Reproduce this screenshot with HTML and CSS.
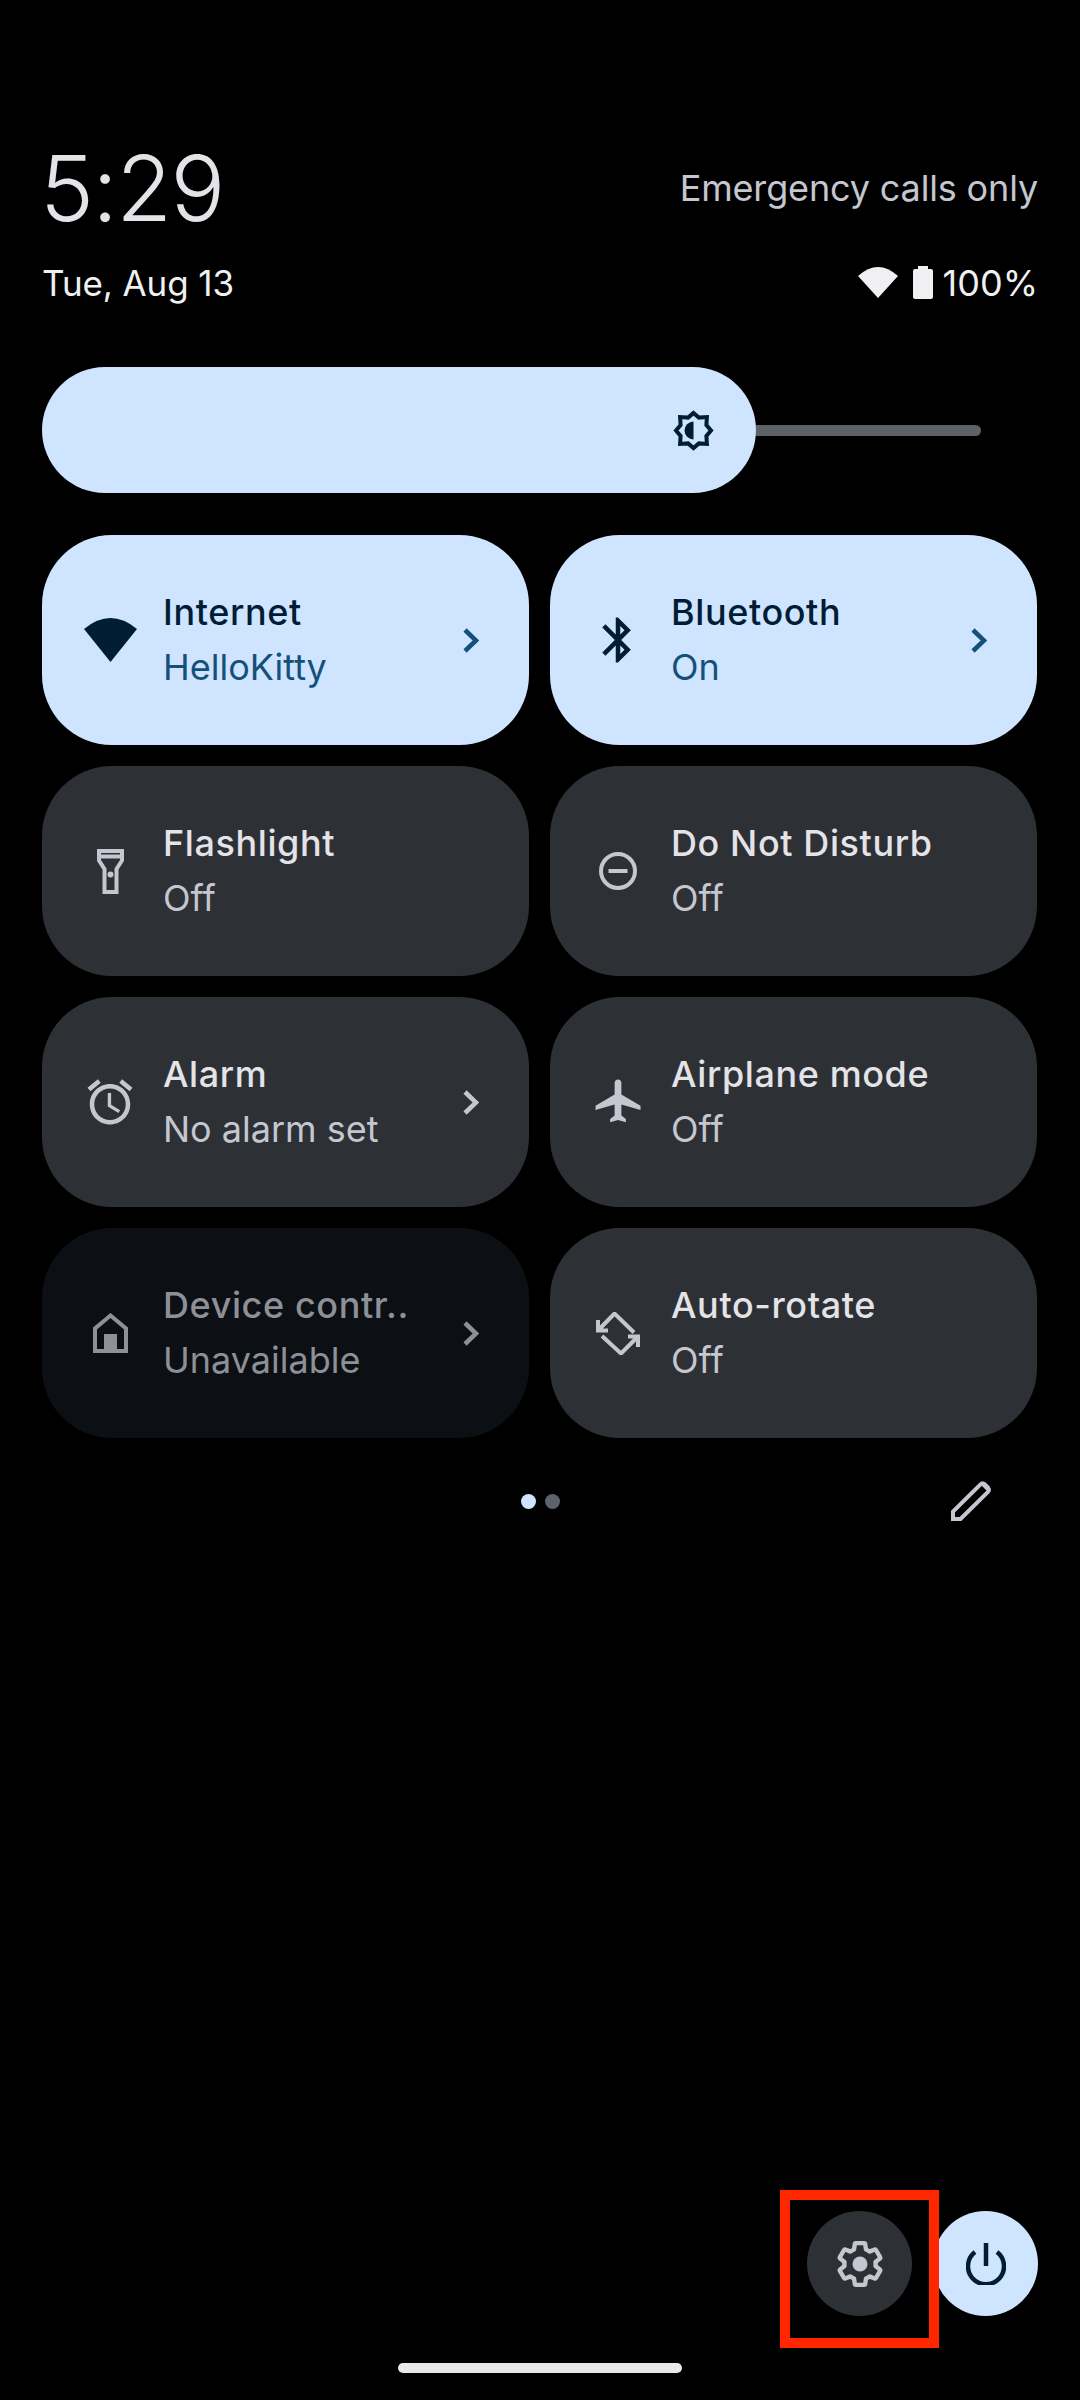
FILE: index.html
```html
<!DOCTYPE html>
<html lang="en">
<head>
    <meta charset="UTF-8">
    <meta name="viewport" content="width=device-width, initial-scale=1.0">
    <title>Quick settings</title>
    <link rel="stylesheet" href="styles.css">
</head>
<body>
    <div class="shade">
        <header class="header">
            <div class="header-row header-top">
                <span class="clock">5:29</span>
                <span class="carrier">Emergency calls only</span>
            </div>
            <div class="header-row header-bottom">
                <span class="date">Tue, Aug 13</span>
                <div class="status">
                    <svg class="status-wifi" viewBox="0 0 40 31"><path d="M0 9Q20-9 40 9L20 31Z"/></svg>
                    <svg class="status-battery" viewBox="0 0 20 33"><path d="M5 0h10v3h3q2 0 2 2v26q0 2-2 2H2q-2 0-2-2V5q0-2 2-2h3Z"/></svg>
                    <span class="battery-text">100%</span>
                </div>
            </div>
        </header>

        <div class="brightness">
            <div class="brightness-fill">
                <svg class="brightness-icon" viewBox="0 0 41 41">
                    <path class="line" d="M20.500 3 25.900 7.600 33.900 7.100 33.400 15.100 38 20.500 33.400 25.900 33.900 33.900 25.900 33.400 20.500 38 15.100 33.400 7.100 33.900 7.600 25.900 3 20.500 7.600 15.100 7.100 7.100 15.100 7.600Z"/>
                    <path d="M20.500 11.500A9 9 0 0 0 20.500 29.500Z"/>
                </svg>
            </div>
            <div class="brightness-track"></div>
        </div>

        <div class="tiles">
            <div class="tile active">
                <div class="tile-icon">
                    <svg class="ic-wifi" viewBox="0 0 53 44"><path class="solid" d="M0 11Q26.500-11 53 11L26.500 44Z"/></svg>
                </div>
                <div class="tile-text">
                    <div class="tile-title">Internet</div>
                    <div class="tile-sub">HelloKitty</div>
                </div>
                <svg class="chevron" viewBox="0 0 16 25"><path d="M2 2 13 12.500 2 23"/></svg>
            </div>
            <div class="tile active">
                <div class="tile-icon">
                    <svg class="ic-full" viewBox="0 0 24 24"><path class="solid" d="M17.71 7.71L12 2h-1v7.59L6.41 5 5 6.41 10.59 12 5 17.59 6.41 19 11 14.41V22h1l5.71-5.71-4.3-4.29 4.3-4.29zM13 5.83l1.88 1.88L13 9.59V5.83zm1.88 10.46L13 18.17v-3.76l1.88 1.88z"/></svg>
                </div>
                <div class="tile-text">
                    <div class="tile-title">Bluetooth</div>
                    <div class="tile-sub">On</div>
                </div>
                <svg class="chevron" viewBox="0 0 16 25"><path d="M2 2 13 12.500 2 23"/></svg>
            </div>

            <div class="tile">
                <div class="tile-icon">
                    <svg class="ic-flash" viewBox="0 0 27 45">
                        <path class="line" d="M2 2H25V11.500L19.500 20V43H7.500V20L2 11.500ZM2 7.500H25"/>
                        <circle class="solid" cx="13.500" cy="25.500" r="3"/>
                    </svg>
                </div>
                <div class="tile-text">
                    <div class="tile-title">Flashlight</div>
                    <div class="tile-sub">Off</div>
                </div>
            </div>
            <div class="tile">
                <div class="tile-icon">
                    <svg class="ic-dnd" viewBox="0 0 38 38">
                        <circle class="line" cx="19" cy="19" r="17"/>
                        <path class="line" d="M9.500 19H28.500"/>
                    </svg>
                </div>
                <div class="tile-text">
                    <div class="tile-title">Do Not Disturb</div>
                    <div class="tile-sub">Off</div>
                </div>
            </div>

            <div class="tile">
                <div class="tile-icon">
                    <svg class="ic-full" viewBox="0 0 24 24"><path class="solid" d="M22 5.72l-4.6-3.86-1.29 1.53 4.6 3.86L22 5.72zM7.88 3.39L6.6 1.86 2 5.71l1.29 1.53 4.59-3.85zM12.5 8H11v6l4.75 2.85.75-1.23-4-2.37V8zM12 4c-4.97 0-9 4.03-9 9s4.03 9 9 9 9-4.03 9-9-4.03-9-9-9zm0 16c-3.87 0-7-3.13-7-7s3.13-7 7-7 7 3.13 7 7-3.13 7-7 7z"/></svg>
                </div>
                <div class="tile-text">
                    <div class="tile-title">Alarm</div>
                    <div class="tile-sub">No alarm set</div>
                </div>
                <svg class="chevron" viewBox="0 0 16 25"><path d="M2 2 13 12.500 2 23"/></svg>
            </div>
            <div class="tile">
                <div class="tile-icon">
                    <svg class="ic-full" viewBox="-0.5 0 24 24"><path class="solid" d="M21.500 15.600v-1.960l-8.500-5V3.500C13 2.670 12.330 2 11.500 2S10 2.670 10 3.500v5.140l-8.500 5v1.960l8.500-2.500V18l-2 1.500V21l3.500-1 3.500 1v-1.500L13 18v-4.900z"/></svg>
                </div>
                <div class="tile-text">
                    <div class="tile-title">Airplane mode</div>
                    <div class="tile-sub">Off</div>
                </div>
            </div>

            <div class="tile disabled">
                <div class="tile-icon">
                    <svg class="ic-home" viewBox="0 0 35 40">
                        <path class="line" d="M2 38V15.500L17.500 2.500 33 15.500V38Z"/>
                        <rect class="solid" x="11" y="21" width="13" height="18"/>
                    </svg>
                </div>
                <div class="tile-text">
                    <div class="tile-title">Device contr..</div>
                    <div class="tile-sub">Unavailable</div>
                </div>
                <svg class="chevron" viewBox="0 0 16 25"><path d="M2 2 13 12.500 2 23"/></svg>
            </div>
            <div class="tile">
                <div class="tile-icon">
                    <svg class="ic-rotate" viewBox="0 0 44 43">
                        <path class="line" d="M38 20.500 18.500 1.500 2 18.500M2 8V18.500H12"/>
                        <path class="line" d="M6 24 25 41.500 42 24.500M42 35V24.500H32"/>
                    </svg>
                </div>
                <div class="tile-text">
                    <div class="tile-title">Auto-rotate</div>
                    <div class="tile-sub">Off</div>
                </div>
            </div>
        </div>

        <div class="pager">
            <div class="dots">
                <span class="dot dot-on"></span>
                <span class="dot"></span>
            </div>
            <svg class="edit" viewBox="0 0 40 40">
                <path class="line" d="M2 38V30.500L29.500 3.300Q31.500 1.300 33.500 3.300L37 6.800Q39 8.800 37 10.800L9.500 38Z"/>
                <path class="edit-head" d="M29 3 37 11 39 6 34 1Z"/>
            </svg>
        </div>

        <footer class="footer">
            <div class="round-btn btn-settings">
                <svg class="ic-gear" viewBox="0 0 24 24">
                    <path class="line" d="M19.43 12.980c.04-.32.07-.64.07-.98s-.03-.66-.07-.98l2.110-1.650c.19-.15.24-.42.12-.64l-2-3.460c-.12-.22-.39-.3-.61-.22l-2.490 1c-.52-.4-1.080-.73-1.690-.98l-.38-2.650C14.460 2.180 14.250 2 14 2h-4c-.25 0-.46.18-.49.42l-.38 2.650c-.61.25-1.170.59-1.690.98l-2.490-1c-.23-.09-.49 0-.61.22l-2 3.460c-.13.22-.07.49.12.64l2.110 1.650c-.04.32-.07.65-.07.98s.03.66.07.98l-2.110 1.650c-.19.15-.24.42-.12.64l2 3.460c.12.22.39.3.61.22l2.490-1c.52.4 1.080.73 1.690.98l.38 2.650c.03.24.24.42.49.42h4c.25 0 .46-.18.49-.42l.38-2.650c.61-.25 1.170-.59 1.690-.98l2.490 1c.23.09.49 0 .61-.22l2-3.460c.12-.22.07-.49-.12-.64l-2.110-1.650z"/>
                    <circle class="solid" cx="12" cy="12" r="3.600"/>
                </svg>
            </div>
            <div class="round-btn btn-power">
                <svg class="ic-power" viewBox="0 0 40 42">
                    <path class="line" d="M20 0V23M9 9A18 18 0 1 0 31 9"/>
                </svg>
            </div>
            <div class="highlight"></div>
        </footer>

        <div class="home-bar"></div>
    </div>
</body>
</html>
```

FILE: styles.css
```css
* {
    box-sizing: border-box;
}

body {
    margin: 0;
    background-color: #000;
    font-family: Inter, Roboto, sans-serif;
}

.shade {
    width: 1080px;
    height: 2400px;
    padding: 0 42px;
    display: flex;
    flex-direction: column;
    overflow: hidden;
}

svg {
    display: block;
}

.line {
    fill: none;
    stroke: currentColor;
    stroke-width: 4;
}

.solid {
    fill: currentColor;
}

/* header */
.header {
    padding-top: 136px;
    color: #e3e3e8;
}

.header-row {
    display: flex;
    justify-content: space-between;
}

.header-top {
    height: 104px;
    align-items: center;
}

.header-bottom {
    height: 67px;
    margin-top: 9px;
    align-items: center;
}

.clock {
    margin-left: -2px;
    font-size: 91px;
    font-weight: 300;
    line-height: 104px;
    letter-spacing: -1.7px;
}

.carrier {
    font-size: 36px;
    letter-spacing: -0.15px;
    color: #c4c7cf;
}

.date {
    font-size: 35px;
    letter-spacing: -0.1px;
    color: #f0f0f2;
}

.battery-text {
    font-size: 36px;
    color: #f0f0f2;
}

.status {
    display: flex;
    align-items: center;
    color: #f0f0f2;
}

.status-wifi {
    width: 40px;
    height: 31px;
    fill: currentColor;
}

.status-battery {
    width: 20px;
    height: 33px;
    margin-left: 15px;
    fill: currentColor;
}

.battery-text {
    margin-left: 10px;
}

/* brightness slider */
.brightness {
    margin-top: 51px;
    display: flex;
    align-items: center;
}

.brightness-fill {
    width: 714px;
    height: 126px;
    border-radius: 63px;
    background-color: #cfe4ff;
    color: #001d35;
    display: flex;
    align-items: center;
    justify-content: flex-end;
    padding-right: 42px;
}

.brightness-icon {
    width: 41px;
    height: 41px;
    fill: currentColor;
}

.brightness-track {
    width: 225px;
    height: 11px;
    background-color: #5e6166;
    border-radius: 0 6px 6px 0;
}

/* tiles */
.tiles {
    margin-top: 42px;
    display: grid;
    grid-template-columns: 487px 487px;
    grid-auto-rows: 210px;
    gap: 21px;
}

.tile {
    display: flex;
    align-items: center;
    padding: 0 50px 0 41px;
    border-radius: 70px;
    background-color: #2d3035;
    color: #c4c7cf;
}

.tile.active {
    background-color: #cfe4ff;
    color: #001d35;
}

.tile.disabled {
    background-color: #0c0f13;
    color: #8d9097;
}

.tile-icon {
    width: 54px;
    height: 54px;
    flex: none;
    display: flex;
    align-items: center;
    justify-content: center;
}

.ic-full {
    width: 54px;
    height: 54px;
}

.ic-wifi {
    width: 53px;
    height: 44px;
}

.ic-flash {
    width: 27px;
    height: 45px;
}

.ic-dnd {
    width: 38px;
    height: 38px;
}

.ic-home {
    width: 35px;
    height: 40px;
}

.ic-rotate {
    width: 44px;
    height: 43px;
}

.tile-text {
    margin: 0 0 2px 26px;
    flex: 1;
    min-width: 0;
}

.tile-title {
    font-size: 36px;
    font-weight: 500;
    line-height: 50px;
    letter-spacing: 0.6px;
    color: #e3e3e8;
    white-space: nowrap;
}

.tile-sub {
    margin-top: 5px;
    font-size: 36px;
    line-height: 50px;
    white-space: nowrap;
}

.tile.active .tile-title {
    color: #001d35;
}

.tile.active .tile-sub {
    color: #14507a;
}

.tile.disabled .tile-title {
    color: #8d9097;
}

.chevron {
    width: 16px;
    height: 25px;
    flex: none;
    fill: none;
    stroke: currentColor;
    stroke-width: 4.5;
}

.tile.active .chevron {
    stroke: #14507a;
}

/* pager */
.pager {
    margin-top: 43px;
    height: 40px;
    display: flex;
    align-items: center;
    justify-content: flex-end;
    position: relative;
    color: #c4c7cf;
    padding-right: 47px;
}

.dots {
    position: absolute;
    left: 479px;
    top: 13px;
    display: flex;
    gap: 9px;
}

.dot {
    width: 15px;
    height: 15px;
    border-radius: 50%;
    background-color: #5d636c;
}

.dot-on {
    background-color: #cfe4ff;
}

.edit {
    width: 40px;
    height: 40px;
}

.edit-head {
    fill: currentColor;
}

/* footer */
.footer {
    margin-top: auto;
    margin-bottom: 84px;
    display: flex;
    justify-content: flex-end;
    gap: 21px;
    position: relative;
}

.round-btn {
    width: 105px;
    height: 105px;
    border-radius: 50%;
    display: flex;
    align-items: center;
    justify-content: center;
}

.btn-settings {
    background-color: #2d3035;
    color: #c4c7cf;
}

.btn-power {
    background-color: #cfe4ff;
    color: #001d35;
}

.ic-gear {
    width: 50px;
    height: 50px;
}

.ic-gear .line {
    stroke-width: 2.1;
    stroke-linejoin: round;
}

.ic-power {
    width: 40px;
    height: 42px;
}

.ic-power .line {
    stroke-width: 4.5;
}

/* red box over the settings button */
.highlight {
    position: absolute;
    right: 99px;
    top: -21px;
    width: 159px;
    height: 158px;
    border: 10px solid #ff2600;
}

.home-bar {
    position: absolute;
    left: 398px;
    top: 2363px;
    width: 284px;
    height: 10px;
    border-radius: 5px;
    background-color: #e8e8e8;
}
```
